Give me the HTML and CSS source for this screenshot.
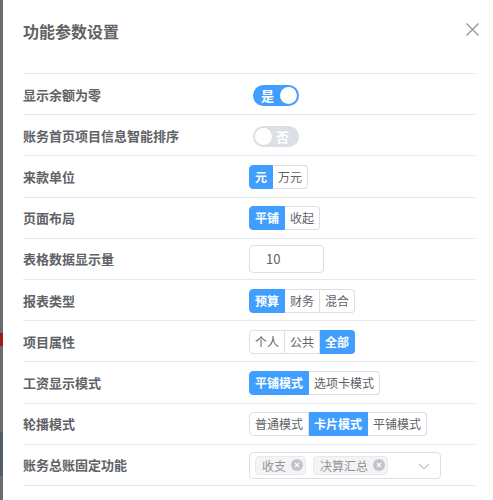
FILE: index.html
```html
<!DOCTYPE html>
<html lang="zh">
<head>
<meta charset="utf-8">
<title>功能参数设置</title>
<link rel="stylesheet" href="styles.css">
</head>
<body>
<div class="page">
  <div class="backdrop"></div>
  <div class="dialog">
    <div class="dialog-header">
      <span class="dialog-title">功能参数设置</span>
      <button class="close-btn" aria-label="关闭">
        <svg width="13" height="13" viewBox="0 0 13 13"><path d="M0.5 0.5L12.5 12.5M12.5 0.5L0.5 12.5" stroke="#909399" stroke-width="1.2" fill="none"/></svg>
      </button>
    </div>
    <div class="form">
      <div class="row">
        <div class="label">显示余额为零</div>
        <div class="control">
          <span class="switch is-on"><span class="switch-text">是</span><span class="switch-dot"></span></span>
        </div>
      </div>
      <div class="row">
        <div class="label">账务首页项目信息智能排序</div>
        <div class="control">
          <span class="switch"><span class="switch-dot"></span><span class="switch-text">否</span></span>
        </div>
      </div>
      <div class="row">
        <div class="label">来款单位</div>
        <div class="control">
          <div class="radio-group"><span class="rb active">元</span><span class="rb">万元</span></div>
        </div>
      </div>
      <div class="row">
        <div class="label">页面布局</div>
        <div class="control">
          <div class="radio-group"><span class="rb active">平铺</span><span class="rb">收起</span></div>
        </div>
      </div>
      <div class="row">
        <div class="label">表格数据显示量</div>
        <div class="control">
          <div class="input">10</div>
        </div>
      </div>
      <div class="row">
        <div class="label">报表类型</div>
        <div class="control">
          <div class="radio-group"><span class="rb active">预算</span><span class="rb">财务</span><span class="rb">混合</span></div>
        </div>
      </div>
      <div class="row">
        <div class="label">项目属性</div>
        <div class="control">
          <div class="radio-group"><span class="rb">个人</span><span class="rb">公共</span><span class="rb active">全部</span></div>
        </div>
      </div>
      <div class="row">
        <div class="label">工资显示模式</div>
        <div class="control">
          <div class="radio-group"><span class="rb active">平铺模式</span><span class="rb">选项卡模式</span></div>
        </div>
      </div>
      <div class="row">
        <div class="label">轮播模式</div>
        <div class="control">
          <div class="radio-group"><span class="rb">普通模式</span><span class="rb active">卡片模式</span><span class="rb">平铺模式</span></div>
        </div>
      </div>
      <div class="row">
        <div class="label">账务总账固定功能</div>
        <div class="control">
          <div class="select">
            <span class="tag">收支<span class="tag-close"><svg width="12" height="12" viewBox="0 0 12 12"><circle cx="6" cy="6" r="6" fill="#c0c4cc"/><path d="M4 4L8 8M8 4L4 8" stroke="#fff" stroke-width="1.1"/></svg></span></span>
            <span class="tag">决算汇总<span class="tag-close"><svg width="12" height="12" viewBox="0 0 12 12"><circle cx="6" cy="6" r="6" fill="#c0c4cc"/><path d="M4 4L8 8M8 4L4 8" stroke="#fff" stroke-width="1.1"/></svg></span></span>
            <span class="select-arrow"><svg width="12" height="7" viewBox="0 0 12 7"><path d="M1 1L6 6L11 1" stroke="#c0c4cc" stroke-width="1.2" fill="none"/></svg></span>
          </div>
        </div>
      </div>
    </div>
  </div>
</div>
</body>
</html>
```
FILE: styles.css
```css
* { box-sizing: border-box; }
html, body { margin: 0; padding: 0; background: #fff; }
body {
  font-family: "Noto Sans CJK SC", "Noto Sans", sans-serif;
  color: #606266;
}
.page {
  display: flex;
  width: 493px;
  height: 500px;
  overflow: hidden;
}
.backdrop {
  width: 3px;
  flex: 0 0 3px;
  background: linear-gradient(to bottom, #6c6c6c 0, #6c6c6c 333px, #9a1d1d 333px, #9a1d1d 346px, #6c6c6c 346px, #6c6c6c 432px, #525c67 432px, #525c67 476px, #6c6c6c 476px);
}
.dialog {
  flex: 1;
  background: #fff;
  padding: 0 18px 0 20px;
}
.dialog-header {
  display: flex;
  align-items: center;
  justify-content: space-between;
  height: 24px;
  margin-top: 19px;
}
.dialog-title {
  font-size: 16px;
  font-weight: 700;
  line-height: 24px;
  color: #606266;
}
.close-btn {
  border: 0;
  background: none;
  padding: 0;
  margin-right: -4px;
  margin-top: -3px;
  width: 13px;
  height: 13px;
  display: flex;
}
.form {
  margin-top: 30px;
  border-top: 1px solid #e4e7ed;
}
.row {
  display: grid;
  grid-template-columns: 226px 1fr;
  align-items: center;
  height: 41.2px;
  padding-top: 1px;
  border-bottom: 1px solid #e4e7ed;
}
.label {
  font-size: 13px;
  font-weight: 700;
  color: #606266;
  line-height: 20px;
}
.control {
  display: flex;
  align-items: center;
}
.switch {
  display: inline-flex;
  align-items: center;
  width: 46px;
  height: 21px;
  border-radius: 11px;
  background: #dcdfe6;
  padding: 0 2px;
  margin-left: 4px;
  margin-top: 2px;
}
.switch.is-on {
  background: #409eff;
  justify-content: space-between;
  padding: 0 2px 0 8px;
}
.switch-dot {
  width: 17px;
  height: 17px;
  border-radius: 50%;
  background: #fff;
}
.switch-text {
  color: #fff;
  font-size: 13px;
  font-weight: 700;
  line-height: 17px;
}
.switch:not(.is-on) .switch-text { margin-left: 4px; }
.radio-group {
  display: inline-flex;
}
.rb {
  height: 24px;
  line-height: 22px;
  font-size: 12px;
  padding: 0 5px;
  border: 1px solid #dcdfe6;
  border-left: 0;
  color: #606266;
  background: #fff;
}
.rb:first-child {
  border-left: 1px solid #dcdfe6;
  border-radius: 4px 0 0 4px;
}
.rb:last-child { border-radius: 0 4px 4px 0; }
.rb.active {
  background: #409eff;
  border-color: #409eff;
  color: #fff;
  font-weight: 700;
}
.input {
  width: 75px;
  height: 28px;
  border: 1px solid #dcdfe6;
  border-radius: 4px;
  padding-left: 16px;
  font-size: 13px;
  line-height: 26px;
  color: #606266;
}
.select {
  display: flex;
  align-items: center;
  width: 192px;
  height: 27px;
  border: 1px solid #dcdfe6;
  border-radius: 4px;
  padding-left: 5px;
  gap: 7px;
}
.tag {
  display: inline-flex;
  align-items: center;
  height: 19px;
  padding: 0 2px 0 6px;
  background: #f4f4f5;
  border: 1px solid #e9e9eb;
  border-radius: 4px;
  font-size: 12px;
  color: #909399;
  line-height: 17px;
}
.tag-close {
  display: flex;
  margin-left: 5px;
}
.select-arrow {
  display: flex;
  margin-left: auto;
  margin-right: 10px;
  margin-top: 2px;
}
```
